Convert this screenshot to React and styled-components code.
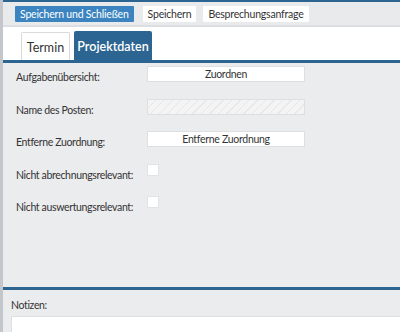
import React from 'react';
import styled, { createGlobalStyle } from 'styled-components';

const blue = '#2c6591';
const lightBlue = '#3b84bf';
const panel = '#ebecee';
const text = '#333';

const GlobalStyle = createGlobalStyle`
	html, body {
		margin: 0;
		padding: 0;
		background: ${panel};
	}
	body {
		font-family: Lato, "Open Sans", sans-serif;
		color: ${text};
	}
`;

const Window = styled.div`
	display: flex;
	flex-direction: column;
	width: 397px;
	height: 332px;
	border-left: 3px solid #c3c6ca;
	overflow: hidden;
`;

const TopLine = styled.div`
	height: 2px;
	background: ${blue};
`;

const Toolbar = styled.div`
	display: flex;
	align-items: center;
	gap: 7px;
	height: 23px;
	padding-left: 12px;
	background: #e9eaec;
	border-bottom: 2px solid #dcdde0;
`;

const ToolButton = styled.button`
	height: 16px;
	padding: 0 5px;
	border: none;
	border-radius: 1px;
	font-family: inherit;
	font-size: 10.5px;
	letter-spacing: -0.2px;
	line-height: 16px;
	background: ${props => (props.primary ? lightBlue : '#fff')};
	color: ${props => (props.primary ? '#fff' : text)};
	margin-right: ${props => (props.primary ? '2px' : '0')};
`;

const TabStrip = styled.div`
	display: flex;
	align-items: flex-end;
	gap: 4px;
	height: 33px;
	padding-left: 18px;
	background: #fff;
	border-bottom: 3px solid ${blue};
`;

const Tab = styled.div`
	display: flex;
	align-items: center;
	justify-content: center;
	box-sizing: border-box;
	width: ${props => props.width}px;
	height: ${props => (props.active ? 29 : 28)}px;
	font-size: 12.5px;
	font-weight: ${props => (props.active ? 600 : 400)};
	border-radius: 2px 2px 0 0;
	background: ${props => (props.active ? blue : '#fff')};
	color: ${props => (props.active ? '#fff' : text)};
	border: ${props => (props.active ? 'none' : '1px solid #d9dadc')};
	border-bottom: none;
	padding-top: 2px;
`;

const Form = styled.div`
	flex: 1;
	display: grid;
	grid-template-columns: 131px 158px;
	grid-auto-rows: 16px;
	row-gap: 16.5px;
	align-content: start;
	padding: 3px 0 0 13px;
	background: ${panel};
`;

const Label = styled.div`
	font-size: 10.5px;
	letter-spacing: -0.35px;
	line-height: 14px;
	padding-top: 4px;
	white-space: nowrap;
`;

const FieldButton = styled.button`
	height: 16px;
	border: 1px solid #dedfe1;
	background: #fff;
	font-family: inherit;
	font-size: 10.5px;
	letter-spacing: -0.3px;
	color: ${text};
	padding: 0;
`;

const DisabledField = styled.div`
	height: 16px;
	box-sizing: border-box;
	border: 1px solid #dedfe1;
	background: repeating-linear-gradient(
		135deg,
		#f4f4f5 0,
		#f4f4f5 5px,
		#e6e7e9 5px,
		#e6e7e9 6px
	);
`;

const Checkbox = styled.div`
	width: 10px;
	height: 10px;
	background: #fff;
	border: 1px solid #e2e3e5;
`;

const Notes = styled.div`
	display: flex;
	flex-direction: column;
	height: 42px;
	padding-left: 8px;
	background: ${panel};
	border-top: 3px solid ${blue};
`;

const NotesLabel = styled.div`
	font-size: 10.5px;
	letter-spacing: -0.35px;
	line-height: 14px;
	padding: 8px 0 4px;
`;

const NotesArea = styled.div`
	flex: 1;
	background: #fff;
	border: 1px solid #dedfe1;
	border-right: none;
	border-bottom: none;
`;

const App = () => (
	<>
		<GlobalStyle />
		<Window>
			<TopLine />
			<Toolbar>
				<ToolButton primary>Speichern und Schließen</ToolButton>
				<ToolButton>Speichern</ToolButton>
				<ToolButton>Besprechungsanfrage</ToolButton>
			</Toolbar>
			<TabStrip>
				<Tab width={49}>Termin</Tab>
				<Tab width={78} active>Projektdaten</Tab>
			</TabStrip>
			<Form>
				<Label>Aufgabenübersicht:</Label>
				<FieldButton>Zuordnen</FieldButton>
				<Label>Name des Posten:</Label>
				<DisabledField />
				<Label>Entferne Zuordnung:</Label>
				<FieldButton>Entferne Zuordnung</FieldButton>
				<Label>Nicht abrechnungsrelevant:</Label>
				<Checkbox />
				<Label>Nicht auswertungsrelevant:</Label>
				<Checkbox />
			</Form>
			<Notes>
				<NotesLabel>Notizen:</NotesLabel>
				<NotesArea />
			</Notes>
		</Window>
	</>
);

export default App;
